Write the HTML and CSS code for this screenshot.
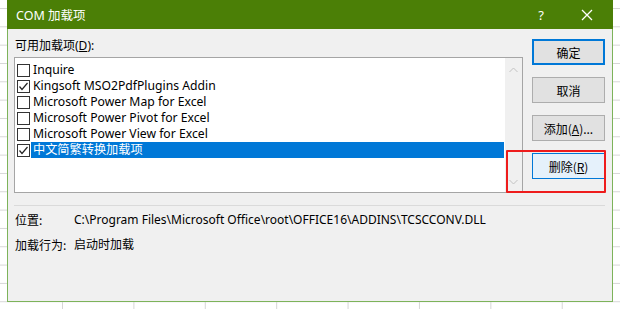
FILE: index.html
```html
<!DOCTYPE html>
<html lang="zh-CN">
<head>
<meta charset="utf-8">
<link rel="stylesheet" href="styles.css">
</head>
<body>
<div class="dialog">
  <div class="titlebar">
    <span class="title">COM 加载项</span>
    <span class="tb-help">?</span>
    <span class="tb-close"><svg width="12" height="12" viewBox="0 0 12 12"><path d="M1 1L11 11M11 1L1 11" stroke="#fff" stroke-width="1.3"/></svg></span>
  </div>
  <div class="body">
    <div class="top">
      <div class="main">
        <div class="label">可用加载项(<u>D</u>):</div>
        <div class="list">
          <div class="items">
            <div class="item"><span class="cb"></span><span class="txt">Inquire</span></div>
            <div class="item"><span class="cb"><svg width="11" height="11" viewBox="0 0 11 11"><path d="M1.5 5.5L4 8.5L9.5 2" fill="none" stroke="#222" stroke-width="1.2"/></svg></span><span class="txt">Kingsoft MSO2PdfPlugins Addin</span></div>
            <div class="item"><span class="cb"></span><span class="txt">Microsoft Power Map for Excel</span></div>
            <div class="item"><span class="cb"></span><span class="txt">Microsoft Power Pivot for Excel</span></div>
            <div class="item"><span class="cb"></span><span class="txt">Microsoft Power View for Excel</span></div>
            <div class="item selected"><span class="cb"><svg width="11" height="11" viewBox="0 0 11 11"><path d="M1.5 5.5L4 8.5L9.5 2" fill="none" stroke="#222" stroke-width="1.2"/></svg></span><span class="txt">中文简繁转换加载项</span></div>
          </div>
          <div class="scrollbar">
            <svg width="9" height="6" viewBox="0 0 9 6"><path d="M0.5 5L4.5 1L8.5 5" fill="none" stroke="#c2c2c2" stroke-width="1"/></svg>
            <svg width="9" height="6" viewBox="0 0 9 6"><path d="M0.5 1L4.5 5L8.5 1" fill="none" stroke="#c2c2c2" stroke-width="1"/></svg>
          </div>
        </div>
      </div>
      <div class="buttons">
        <button class="btn default">确定</button>
        <button class="btn">取消</button>
        <button class="btn">添加(<u>A</u>)...</button>
        <button class="btn hover">删除(<u>R</u>)</button>
      </div>
    </div>
    <div class="sep"></div>
    <div class="info">
      <div class="row"><span class="k">位置:</span><span class="v">C:\Program Files\Microsoft Office\root\OFFICE16\ADDINS\TCSCCONV.DLL</span></div>
      <div class="row"><span class="k">加载行为:</span><span class="v">启动时加载</span></div>
    </div>
  </div>
  <div class="highlight"></div>
</div>
</body>
</html>
```

FILE: styles.css
```css
html, body {
  margin: 0;
  padding: 0;
}
body {
  width: 620px;
  height: 309px;
  overflow: hidden;
  background-color: #ffffff;
  background-image:
    linear-gradient(to bottom, #d6d6d6 1px, transparent 1px),
    linear-gradient(to right, #d6d6d6 1px, transparent 1px);
  background-size: 71.4px 18.33px;
  background-position: -9.4px 8px;
  font-family: "Noto Sans", "Noto Sans CJK SC", sans-serif;
  font-size: 12px;
  color: #000;
}
.dialog {
  position: relative;
  margin-left: 7px;
  width: 604px;
  height: 301px;
  background: #f0f0f0;
  border: 1px solid #7db35a;
  border-top: none;
  display: flex;
  flex-direction: column;
}
.titlebar {
  height: 29px;
  margin: 0 -1px;
  background: #4b7f06;
  color: #fff;
  display: flex;
  align-items: center;
  font-size: 12.5px;
}
.title {
  margin-left: 9px;
  flex: 1;
}
.tb-help {
  width: 12px;
  text-align: center;
  margin-right: 34px;
  font-size: 13px;
}
.tb-close {
  display: flex;
  margin-right: 20px;
}
.body {
  flex: 1;
  padding: 9px 7px 0 6px;
  display: flex;
  flex-direction: column;
}
.top {
  display: flex;
  gap: 9px;
}
.main {
  width: 509px;
}
.label {
  height: 16px;
  line-height: 16px;
  padding-left: 1px;
  margin-bottom: 3px;
}
.list {
  height: 134px;
  border: 1px solid #a5a5a5;
  background: #fff;
  display: flex;
}
.items {
  flex: 1;
  padding-top: 4px;
}
.item {
  height: 16px;
  display: flex;
  align-items: center;
  line-height: 16px;
}
.cb {
  width: 11px;
  height: 11px;
  border: 1px solid #333;
  background: #fff;
  margin-left: 2px;
  margin-right: 1px;
  flex: none;
  display: flex;
}
.txt {
  flex: 1;
  padding-left: 2px;
  height: 16px;
  color: #000;
  font-size: 12.2px;
}
.selected .txt {
  background: #0078d7;
  color: #fff;
  margin-right: 1px;
}
.scrollbar {
  width: 17px;
  background: #f0f0f0;
  display: flex;
  flex-direction: column;
  align-items: center;
  justify-content: space-between;
  padding: 9px 0 7px;
  box-sizing: border-box;
}
.buttons {
  margin-top: 1px;
  display: flex;
  flex-direction: column;
  gap: 12px;
}
.btn {
  width: 73px;
  height: 26px;
  font-family: "Noto Sans CJK SC", "Noto Sans", sans-serif;
  font-size: 12px;
  color: #000;
  background: #e1e1e1;
  border: 1px solid #adadad;
  padding: 0;
  margin: 0;
}
.btn.default {
  border: 2px solid #0078d7;
}
.btn.hover {
  background: #e5f1fb;
  border: 1px solid #0078d7;
}
.sep {
  height: 1px;
  background: #dadada;
  margin-top: 12px;
}
.info {
  padding-top: 6px;
}
.row {
  height: 25px;
  line-height: 16px;
  display: flex;
}
.k {
  width: 59px;
  padding-left: 1px;
  font-family: "Noto Sans CJK SC", sans-serif;
}
.v {
  color: #000;
}
.highlight {
  position: absolute;
  left: 498px;
  top: 150px;
  width: 96px;
  height: 39px;
  border: 2px solid #ee1c1c;
  border-radius: 1px;
}
```
